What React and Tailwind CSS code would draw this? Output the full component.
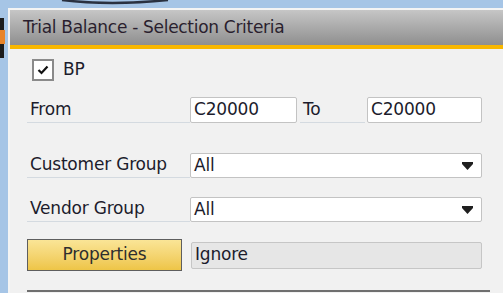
import React from 'react';

const font = { fontFamily: '"DejaVu Sans", "Liberation Sans", sans-serif' };

const DropArrow = () => (
  <svg width="11" height="8" viewBox="0 0 11 8" className="mr-[8px]">
    <rect x="0" y="0" width="11" height="2" fill="#1f1f1f" />
    <polygon points="0,2 11,2 5.5,8" fill="#1f1f1f" />
  </svg>
);

const Label = ({ children, width = 'w-[163px]' }) => (
  <div className={`${width} h-full flex items-center pl-[3px] border-b border-[#d4dae0] text-[#1c1c2c]`}>
    {children}
  </div>
);

const App = () => {
  return (
    <div
      className="relative w-[503px] h-[293px] overflow-hidden bg-[#a6c5e6] pl-[8px] pt-[8px]"
      style={font}
    >
      {/* wallpaper bits */}
      <svg className="absolute left-0 top-0" width="503" height="293">
        <path d="M62 0 Q110 6 168 0" stroke="#2a3140" strokeWidth="2.5" fill="none" />
        <path d="M0 18 L4 18 L4 58 L0 58 Z" fill="#1c1c1c" />
        <path d="M0 30 L5 30 L5 44 L0 44 Z" fill="#e8842a" />
      </svg>

      <div className="relative flex flex-col h-full border-l-2 border-t-2 border-[#f4f4f4]">
        {/* title bar */}
        <div className="h-[35px] flex items-center pl-[13px] bg-gradient-to-b from-[#c6c6c6] to-[#8f8f8f]">
          <span className="text-[17px] text-[#2a1f2e] tracking-[-0.3px]">Trial Balance - Selection Criteria</span>
        </div>
        <div className="h-[4px] bg-[#f8b700]" />

        {/* body */}
        <div className="flex-1 bg-[#f1f1f1] pl-[17px] text-[17px] tracking-[-0.2px] text-[#1c1c2c]">
          <div className="mt-[10px] flex items-center h-[22px]">
            <div className="ml-[5px] w-[22px] h-[22px] border-2 border-[#8a8a8a] bg-white flex items-center justify-center">
              <svg width="12" height="10" viewBox="0 0 12 10">
                <path d="M1.5 5 L4.5 8 L10.5 1.5" stroke="#111" strokeWidth="2.2" fill="none" />
              </svg>
            </div>
            <span className="ml-[9px]">BP</span>
          </div>

          <div className="mt-[16px] flex items-center h-[26px]">
            <Label>From</Label>
            <div className="w-[107px] h-[26px] border border-[#c3c3c3] rounded-[2px] bg-white flex items-center pl-[3px]">
              C20000
            </div>
            <div className="ml-[3px] w-[67px] h-full">
              <Label width="w-[65px]">To</Label>
            </div>
            <div className="w-[115px] h-[26px] border border-[#c3c3c3] rounded-[2px] bg-white flex items-center pl-[3px]">
              C20000
            </div>
          </div>

          <div className="mt-[30px] flex items-center h-[25px]">
            <Label>Customer Group</Label>
            <div className="w-[292px] h-[25px] border border-[#c3c3c3] rounded-[2px] bg-white flex items-center justify-between pl-[3px]">
              <span>All</span>
              <DropArrow />
            </div>
          </div>

          <div className="mt-[19px] flex items-center h-[25px]">
            <Label>Vendor Group</Label>
            <div className="w-[292px] h-[25px] border border-[#c3c3c3] rounded-[2px] bg-white flex items-center justify-between pl-[3px]">
              <span>All</span>
              <DropArrow />
            </div>
          </div>

          <div className="mt-[17px] flex items-center h-[32px]">
            <button className="w-[155px] h-[32px] border border-[#5e5e5e] bg-gradient-to-b from-[#fae596] to-[#eec546] text-[#2e2e2e] flex items-center justify-center">
              Properties
            </button>
            <div className="ml-[9px] w-[291px] h-[27px] border border-[#c6c6c6] rounded-[2px] bg-[#e6e6e6] flex items-center pl-[3px]">
              Ignore
            </div>
          </div>

          <div className="mt-[19px] w-[463px] border-t-2 border-[#6f6f6f]" />
        </div>
      </div>
    </div>
  );
};

export default App;
